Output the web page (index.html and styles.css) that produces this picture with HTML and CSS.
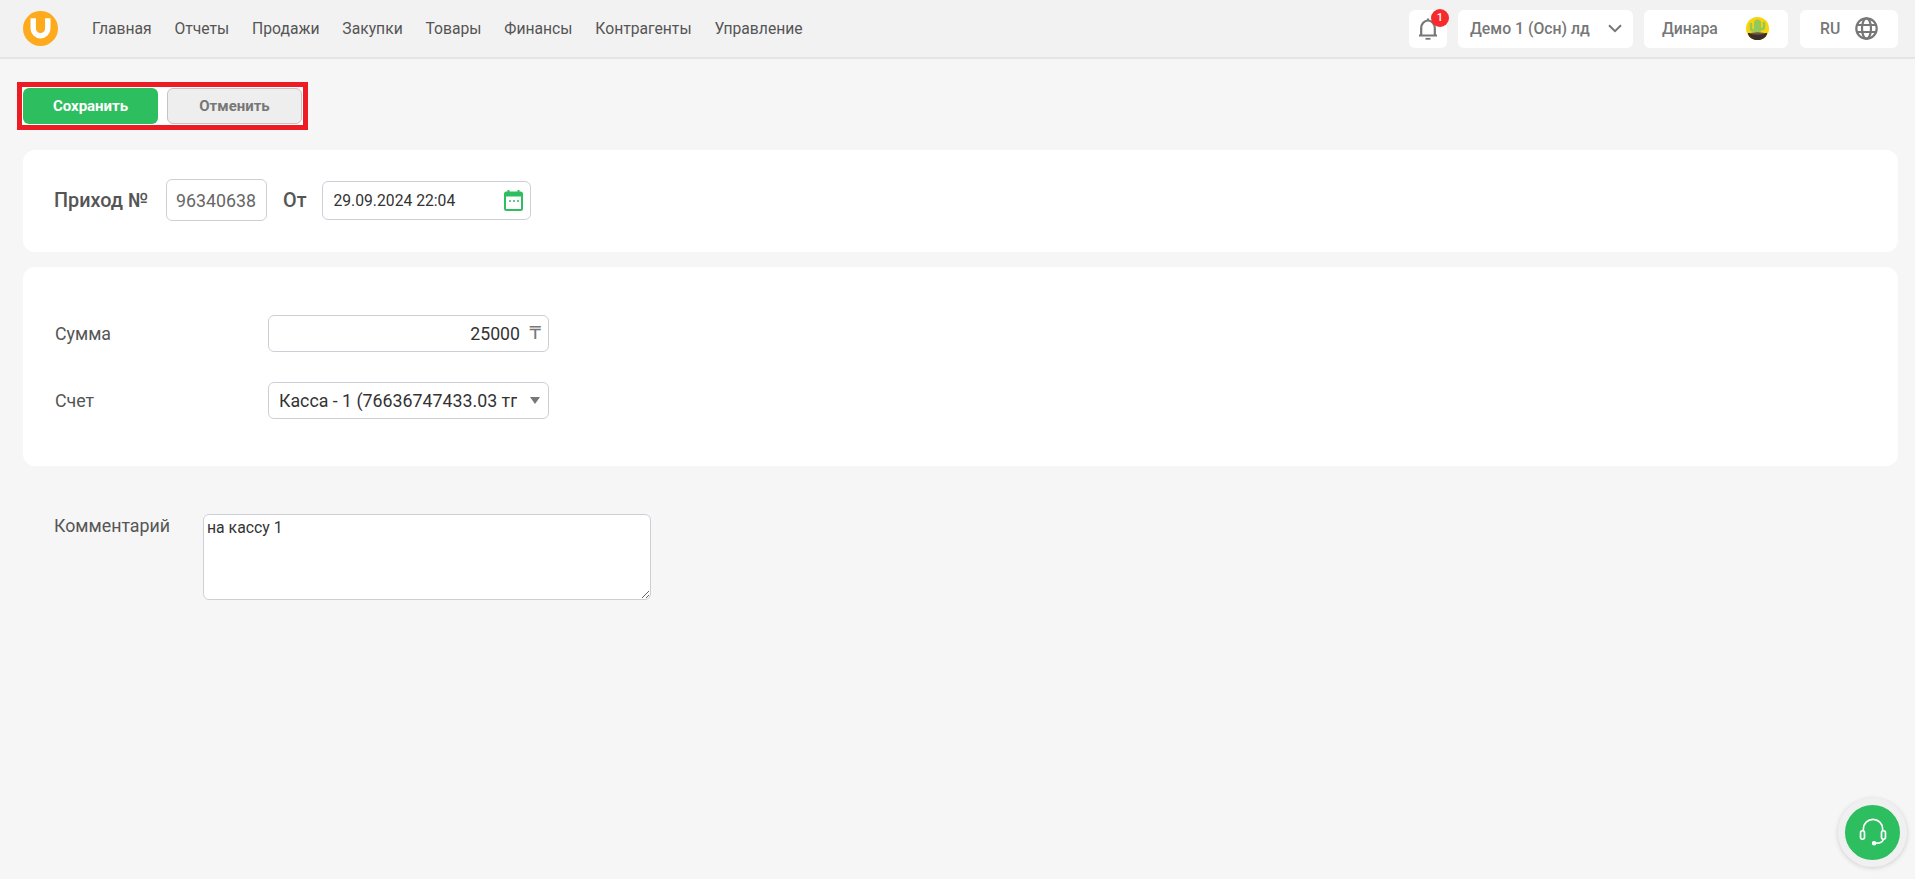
FILE: index.html
```html
<!DOCTYPE html>
<html lang="ru">
<head>
<meta charset="utf-8">
<title>Приход</title>
<link rel="stylesheet" href="styles.css">
</head>
<body>
<header class="topbar">
  <a class="logo" href="#" aria-label="Логотип">
    <svg width="35" height="35" viewBox="0 0 36 36"><circle cx="18" cy="18" r="18" fill="#fdab1d"/><path d="M10.500 7.500V18a7.500 7.500 0 0 0 15 0V7.500" fill="none" stroke="#fff" stroke-width="5.600"/></svg>
  </a>
  <nav class="nav">
    <a href="#">Главная</a><a href="#">Отчеты</a><a href="#">Продажи</a><a href="#">Закупки</a><a href="#">Товары</a><a href="#">Финансы</a><a href="#">Контрагенты</a><a href="#">Управление</a>
  </nav>
  <div class="tools">
    <div class="tool tool-bell">
      <svg width="22" height="24" viewBox="0 0 22 24" fill="none" stroke="#777" stroke-width="2.200"><path d="M2 18.500h18M4.200 18.500V11a6.800 7.500 0 0 1 13.600 0v7.500"/><path d="M11 3.500V1.500"/><path d="M8.500 21.800h5" stroke-width="1.800"/></svg>
      <span class="badge">1</span>
    </div>
    <div class="tool tool-company"><span>Демо 1 (Осн) лд</span>
      <svg width="14" height="9" viewBox="0 0 14 9" fill="none" stroke="#777" stroke-width="2"><path d="M1 1.200l6 6 6-6"/></svg>
    </div>
    <div class="tool tool-user"><span>Динара</span>
      <svg width="23" height="23" viewBox="0 0 23 23"><clipPath id="av"><circle cx="11.500" cy="11.500" r="11.500"/></clipPath><g clip-path="url(#av)"><rect width="23" height="23" fill="#fbd30c"/><rect x="8" y="2.500" width="7" height="14" rx="3.500" fill="#93c85a"/><path d="M5 7v4.500a2 2 0 0 0 2 2h2M18 6v4a2 2 0 0 1-2 2h-2" fill="none" stroke="#93c85a" stroke-width="2.600" stroke-linecap="round"/><path d="M2 16h19c0 3-2 7-4 7H6c-2 0-4-4-4-7z" fill="#3a2e26"/><ellipse cx="11.500" cy="16.500" rx="8" ry="1.200" fill="#6b5a3c"/></g></svg>
    </div>
    <div class="tool tool-lang"><span>RU</span>
      <svg width="23" height="23" viewBox="0 0 23 23" fill="none" stroke="#777" stroke-width="2.200"><circle cx="11.500" cy="11.500" r="10.200"/><ellipse cx="11.500" cy="11.500" rx="4.500" ry="10.200"/><path d="M2 8h19M2 15h19"/></svg>
    </div>
  </div>
</header>

<main class="page">
  <div class="actions">
    <button class="btn btn-save" type="button">Сохранить</button>
    <button class="btn btn-cancel" type="button">Отменить</button>
  </div>

  <section class="card card-head">
    <span class="head-label">Приход №</span>
    <input class="field field-number" type="text" value="96340638">
    <span class="head-label head-from">От</span>
    <div class="date-box">
      <input class="field field-date" type="text" value="29.09.2024 22:04">
      <svg class="date-icon" width="19" height="21" viewBox="0 0 19 21"><path d="M4.500 0v3M14.500 0v3" stroke="#2dbe60" stroke-width="2"/><rect x="1" y="2.500" width="17" height="17.500" rx="1.500" fill="#fff" stroke="#2dbe60" stroke-width="2"/><rect x="1" y="2.500" width="17" height="4" fill="#2dbe60"/><path d="M5 11h2M9 11h2M13 11h2" stroke="#2dbe60" stroke-width="1.600"/></svg>
    </div>
  </section>

  <section class="card card-form">
    <div class="row">
      <label class="row-label">Сумма</label>
      <div class="control">
        <input class="field field-sum" type="text" value="25000">
        <span class="currency">₸</span>
      </div>
    </div>
    <div class="row">
      <label class="row-label">Счет</label>
      <div class="control">
        <select class="field field-select"><option>Касса - 1 (76636747433.03 тг)</option></select>
        <span class="caret"></span>
      </div>
    </div>
  </section>

  <section class="comment">
    <label class="comment-label">Комментарий</label>
    <textarea class="comment-input">на кассу 1</textarea>
  </section>
</main>

<button class="support" type="button" aria-label="Поддержка">
  <svg width="34" height="34" viewBox="0 0 30 30" fill="none" stroke="#fff" stroke-width="1.500"><path d="M6.500 13V11.500a8.500 8.500 0 0 1 17 0V13"/><rect x="4" y="13" width="3.500" height="7.500" rx="1.700"/><rect x="22.500" y="13" width="3.500" height="7.500" rx="1.700"/><path d="M24 20.500c0 2.500-2.500 3.500-6.500 3.500"/><circle cx="16" cy="24" r="1.300" fill="#fff"/></svg>
</button>
</body>
</html>
```
FILE: styles.css
```css
* { box-sizing: border-box; }
html, body { margin: 0; height: 100%; }
body {
  background: #f6f6f6;
  color: #555;
  font-family: Roboto, "Liberation Sans", sans-serif;
  font-size: 14px;
  overflow: hidden;
}
.topbar {
  height: 59px;
  background: #f2f2f2;
  border-bottom: 2px solid #e4e4e4;
  display: flex;
  align-items: center;
  padding: 0 17px 0 23px;
}
.logo { display: flex; width: 35px; height: 35px; margin-right: 34px; }
.nav { display: flex; gap: 22.8px; }
.nav a { color: #555; text-decoration: none; font-size: 15.7px; line-height: 20px; }
.tools { margin-left: auto; display: flex; gap: 11px; }
.tool {
  height: 38px;
  background: #fff;
  border-radius: 6px;
  display: flex;
  align-items: center;
  color: #777;
  font-weight: 500;
  font-size: 15.8px;
}
.tool-bell { width: 38px; justify-content: center; position: relative; }
.badge {
  position: absolute;
  top: -1px;
  right: -2px;
  width: 18px;
  height: 18px;
  border-radius: 50%;
  background: #f72b2b;
  color: #fff;
  font-size: 11px;
  line-height: 18px;
  text-align: center;
  font-weight: 500;
}
.tool-company { width: 175px; padding: 0 11px 0 12px; justify-content: space-between; }
.tool-user { width: 144px; padding: 0 19px 0 18px; justify-content: space-between; margin-right: 1px; }
.tool-lang { width: 98px; padding: 0 20px 0 20px; justify-content: space-between; }
.page { padding: 23px 17px 0 23px; }
.actions {
  display: flex;
  gap: 9px;
  width: 291px;
  height: 48px;
  margin-left: -6px;
  padding: 1px;
  background: #fff;
  border: 5px solid #ed1c24;
}
.btn {
  width: 135px;
  height: 36px;
  border-radius: 6px;
  font-family: inherit;
  font-size: 15px;
  font-weight: 700;
  padding: 0;
}
.btn-save { background: #2dbe60; border: 0; color: #fff; }
.btn-cancel { background: #eee; border: 1px solid #c4c4c4; color: #777; }
.card { background: #fff; border-radius: 12px; }
.card-head {
  margin-top: 20px;
  height: 102px;
  padding: 0 0 2px 31px;
  display: flex;
  align-items: center;
}
.head-label { font-size: 19.8px; font-weight: 500; color: #555; }
.head-from { margin: 0 16px 0 16px; }
.field {
  border: 1px solid #ccd0d6;
  border-radius: 6px;
  background: #fff;
  font-family: inherit;
  outline: none;
}
.field-number {
  margin-left: 18px;
  width: 101px;
  height: 42px;
  padding: 0 9px;
  font-size: 17.8px;
  color: #666;
}
.date-box { position: relative; width: 209px; height: 39px; }
.field-date { width: 100%; height: 100%; padding: 0 10px; font-size: 15.7px; color: #333; }
.date-icon { position: absolute; top: 9px; right: 8px; }
.card-form { margin-top: 15px; height: 199px; padding: 48px 0 0 32px; display: flex; flex-direction: column; gap: 30px; }
.row { display: flex; align-items: center; }
.row-label { width: 213px; font-size: 17.8px; color: #555; }
.control { position: relative; width: 281px; height: 37px; }
.field-sum {
  width: 100%;
  height: 100%;
  padding: 0 28px 0 10px;
  text-align: right;
  font-size: 17.7px;
  color: #333;
}
.currency {
  position: absolute;
  top: 6px;
  right: 8px;
  font-family: "DejaVu Sans", sans-serif;
  font-size: 18px;
  line-height: 24px;
  color: #777;
}
.field-select {
  appearance: none;
  width: 100%;
  height: 100%;
  padding: 0 31px 0 10px;
  font-size: 17.8px;
  color: #333;
}
.caret {
  position: absolute;
  top: 15px;
  right: 9px;
  border-left: 5px solid transparent;
  border-right: 5px solid transparent;
  border-top: 7px solid #777;
}
.comment { display: flex; align-items: flex-start; margin-top: 48px; padding-left: 31px; }
.comment-label { width: 149px; font-size: 17.8px; line-height: 24px; color: #555; }
.comment-input {
  width: 448px;
  height: 86px;
  border: 1px solid #ccd0d6;
  border-radius: 6px;
  padding: 3px;
  font-family: inherit;
  font-size: 15.8px;
  color: #333;
  background: #fff;
  outline: none;
}
.support {
  position: absolute;
  right: 8px;
  bottom: 12px;
  width: 69px;
  height: 69px;
  padding: 0;
  border-radius: 50%;
  background: #2dbe60;
  border: 7px solid #f0f0f0;
  box-shadow: 0 1px 5px rgba(0, 0, 0, .16);
  display: flex;
  align-items: center;
  justify-content: center;
}
```
